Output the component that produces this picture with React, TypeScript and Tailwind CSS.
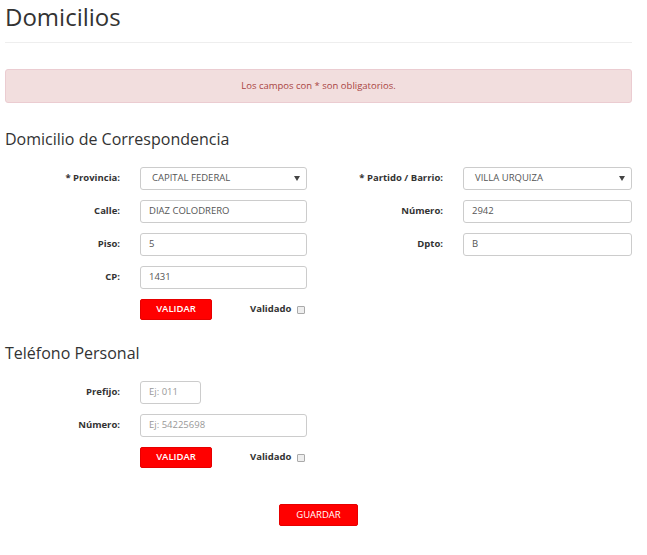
import React from 'react';

const font = { fontFamily: '"Open Sans", "Liberation Sans", sans-serif' };

const Label = ({ children, w }: { children: React.ReactNode; w: string }) => (
  <label className={`${w} shrink-0 text-right text-[9.5px] font-bold text-[#333]`}>{children}</label>
);

const TextInput = ({ value, placeholder, w = 'w-[167px]' }: { value?: string; placeholder?: string; w?: string }) => (
  <div
    className={`${w} ml-[20px] h-[23px] flex items-center px-[8px] border border-[#ccc] rounded-[3px] bg-white text-[9.5px] ${
      value ? 'text-[#555]' : 'text-[#999]'
    }`}
  >
    {value || placeholder}
  </div>
);

const SelectInput = ({ value, w = 'w-[167px]' }: { value: string; w?: string }) => (
  <div
    className={`${w} ml-[20px] h-[23px] flex items-center justify-between pl-[11px] pr-[6px] border border-[#ccc] rounded-[3px] bg-white text-[9.5px] text-[#555]`}
  >
    <span>{value}</span>
    <svg width="6" height="5" viewBox="0 0 6 5">
      <path d="M0 0 L6 0 L3 5 Z" fill="#444" />
    </svg>
  </div>
);

const ValidarRow = () => (
  <div className="flex items-center h-[21px]">
    <div className="w-[135px] shrink-0" />
    <button className="w-[72px] h-[21px] bg-[#f00] border border-[#e60000] rounded-[2px] text-white text-[9.5px] font-semibold">
      VALIDAR
    </button>
    <div className="ml-[38px] flex items-center">
      <span className="text-[9.5px] font-bold text-[#333]">Validado</span>
      <span className="ml-[6px] w-[8px] h-[8px] border border-[#aaa] bg-[#eee] rounded-[1px]" />
    </div>
  </div>
);

export default function App() {
  return (
    <div className="w-[647px] h-[555px] bg-white px-[5px] overflow-hidden" style={font}>
      <div className="w-[627px]">
        <h1 className="pt-[2px] text-[24px] leading-[30px] font-normal text-[#333]">Domicilios</h1>
        <div className="mt-[10px] h-px bg-[#eee]" />

        <div className="mt-[26px] h-[34px] flex items-center justify-center bg-[#f2dede] border border-[#ebccd1] rounded-[3px] text-[9.5px] text-[#a94442]">
          Los campos con * son obligatorios.
        </div>

        <h3 className="mt-[26px] text-[16px] leading-[20px] font-normal text-[#333]">Domicilio de Correspondencia</h3>

        <div className="mt-[18px]">
          <div className="flex items-center mb-[10px]">
            <div className="w-[318px] flex items-center">
              <Label w="w-[115px]">* Provincia:</Label>
              <SelectInput value="CAPITAL FEDERAL" />
            </div>
            <div className="flex items-center">
              <Label w="w-[120px]">* Partido / Barrio:</Label>
              <SelectInput value="VILLA URQUIZA" w="w-[169px]" />
            </div>
          </div>
          <div className="flex items-center mb-[10px]">
            <div className="w-[318px] flex items-center">
              <Label w="w-[115px]">Calle:</Label>
              <TextInput value="DIAZ COLODRERO" />
            </div>
            <div className="flex items-center">
              <Label w="w-[120px]">Número:</Label>
              <TextInput value="2942" w="w-[169px]" />
            </div>
          </div>
          <div className="flex items-center mb-[10px]">
            <div className="w-[318px] flex items-center">
              <Label w="w-[115px]">Piso:</Label>
              <TextInput value="5" />
            </div>
            <div className="flex items-center">
              <Label w="w-[120px]">Dpto:</Label>
              <TextInput value="B" w="w-[169px]" />
            </div>
          </div>
          <div className="flex items-center mb-[10px]">
            <Label w="w-[115px]">CP:</Label>
            <TextInput value="1431" />
          </div>
          <ValidarRow />
        </div>

        <h3 className="mt-[23px] text-[16px] leading-[20px] font-normal text-[#333]">Teléfono Personal</h3>

        <div className="mt-[18px]">
          <div className="flex items-center mb-[10px]">
            <Label w="w-[115px]">Prefijo:</Label>
            <TextInput placeholder="Ej: 011" w="w-[61px]" />
          </div>
          <div className="flex items-center mb-[10px]">
            <Label w="w-[115px]">Número:</Label>
            <TextInput placeholder="Ej: 54225698" />
          </div>
          <ValidarRow />
        </div>

        <div className="mt-[36px] flex justify-center">
          <button className="w-[79px] h-[22px] bg-[#f00] border border-[#e60000] rounded-[2px] text-white text-[9.5px]">
            GUARDAR
          </button>
        </div>
      </div>
    </div>
  );
}
